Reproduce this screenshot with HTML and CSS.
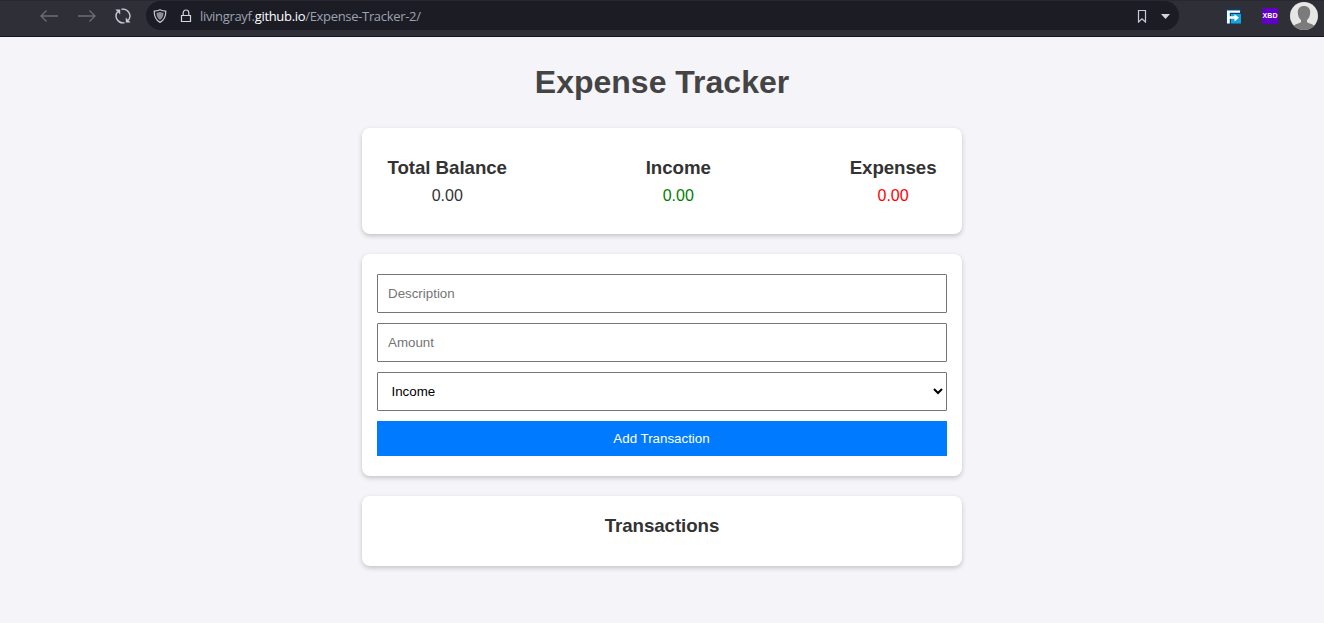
FILE: index.html
```html
<!DOCTYPE html>
<html lang="en">
<head>
<meta charset="utf-8">
<title>Expense Tracker</title>
<link rel="stylesheet" href="styles.css">
</head>
<body>
<header class="toolbar">
  <div class="nav">
    <svg width="18" height="12" viewBox="0 0 18 12" class="dim"><path d="M18 6H1M6.500.5L1 6l5.500 5.500"/></svg>
    <svg width="18" height="12" viewBox="0 0 18 12" class="dim"><path d="M0 6h17M11.500.5L17 6l-5.500 5.500"/></svg>
    <svg width="16" height="16" viewBox="0 0 16 16" class="reload"><path d="M9.500 14.700A6.900 6.900 0 0 1 2.600 3.700M6.500 1.300a6.900 6.900 0 0 1 6.900 11"/><path class="solid" d="M.4 1.600h4.800v4.800zM15.600 14.400h-4.800V9.600z"/></svg>
  </div>
  <div class="address">
    <svg width="14" height="14" viewBox="0 0 14 14" class="shield"><path d="M7 .7c2 1 4 1.400 5.800 1.500C12.800 7.500 11.500 11 7 13.400 2.500 11 1.200 7.500 1.200 2.200 3 2.100 5 1.700 7 .7z"/><path class="core" d="M7 3c1.200.5 2.200.8 3.500.9C10.300 7.500 9.300 9.500 7 11 4.700 9.500 3.700 7.500 3.500 3.900 4.800 3.800 5.800 3.500 7 3z"/></svg>
    <svg width="12" height="14" viewBox="0 0 12 14" class="lock"><path d="M1.500 6.500h9v6h-9zM3.200 6.500V3.800a2.800 2.800 0 0 1 5.600 0v2.700"/></svg>
    <span class="url">livingrayf.<b>github.io</b>/Expense-Tracker-2/</span>
    <svg width="10" height="14" viewBox="0 0 10 14" class="bookmark"><path d="M1.500 1.500h7V13L5 9.800 1.500 13z"/></svg>
    <svg width="9" height="5" viewBox="0 0 9 5" class="caret"><path d="M0 0h9L4.500 5z"/></svg>
  </div>
  <div class="extensions">
    <svg width="16" height="16" viewBox="0 0 16 16"><path fill="#064477" d="M0 1h15v14.500H0z"/><path fill="#12a5df" d="M5 6h10v9.500H5z"/><path fill="#fff" d="M1 2.500h13v2.300H3.800v3.400h4.700V6L13 9.700l-4.500 3.800v-2.700H3.800v4.700H1z"/></svg>
    <span class="xbd">XBD</span>
    <svg width="28" height="28" viewBox="0 0 28 28"><defs><clipPath id="face"><circle cx="14" cy="14" r="14"/></clipPath></defs><g clip-path="url(#face)"><path fill="#e6e6e6" d="M0 0h28v28H0z"/><path fill="#7b7b7b" d="M14 4c4 0 6.300 2.600 6.200 6.400-.1 3.800-1.500 6-3.200 7.600v2c1.500 1.700 5 1.500 7.500 4V28h-21v-4C6 21.500 9.500 21.700 11 20v-2c-1.700-1.600-3.100-3.800-3.200-7.600C7.700 6.600 10 4 14 4z"/></g></svg>
  </div>
</header>
<main class="page">
  <h1 class="title">Expense Tracker</h1>
  <section class="card summary">
    <div><h3>Total Balance</h3><p>0.00</p></div>
    <div><h3>Income</h3><p class="income">0.00</p></div>
    <div><h3>Expenses</h3><p class="expense">0.00</p></div>
  </section>
  <form class="card form">
    <input class="field" type="text" placeholder="Description">
    <input class="field" type="number" placeholder="Amount">
    <select class="field select"><option>Income</option><option>Expense</option></select>
    <button class="submit" type="button">Add Transaction</button>
  </form>
  <section class="card history"><h3>Transactions</h3></section>
</main>
</body>
</html>
```
FILE: styles.css
```css
* { box-sizing: border-box; margin: 0; padding: 0; }
body { background: #f4f4f9; color: #333; font-family: "Liberation Sans", Arial, sans-serif; height: 623px; overflow: hidden; }
svg { display: block; flex: none; fill: none; }
.toolbar { display: flex; align-items: flex-start; height: 37px; background: #2f2f38; border-bottom: 1px solid #17171f; border-top: 1px solid #282830; }
.nav { display: flex; align-items: center; gap: 19.500px; width: 146px; height: 30px; padding-left: 40px; }
.dim { stroke: #6e6e77; stroke-width: 1.3; }
.reload { stroke: #c5cbd5; stroke-width: 1.4; }
.reload .solid { fill: #c5cbd5; stroke: none; }
.address { display: flex; align-items: center; width: 1033px; height: 29px; padding: 0 9px 0 7px; border-radius: 15px; background: #1c1c25; }
.shield { stroke: #c5cbd5; stroke-width: 1.2; }
.shield .core { fill: #888f9a; stroke: none; }
.lock { margin-left: 13px; stroke: #d0d6df; stroke-width: 1.2; }
.url { margin-left: 8px; flex: 1; font: 13px/20px "Open Sans", "Noto Sans", sans-serif; letter-spacing: -.32px; color: #9ba3b0; white-space: nowrap; }
.url b { font-weight: 400; color: #fff; }
.bookmark { stroke: #c5cbd5; stroke-width: 1.2; margin-right: 14px; }
.caret { fill: #d0d6df; position: relative; top: 1px; }
.extensions { display: flex; align-items: center; height: 30px; margin-left: 47px; }
.xbd { width: 16px; height: 16px; margin: 0 12px 0 20px; background: #6100c2; color: #fff; font: bold 7px/16px "Liberation Sans", sans-serif; letter-spacing: .1px; text-align: center; }
.page { width: 600px; margin: 0 auto; }
.title { margin: 27px 0 27px; font-size: 32px; line-height: 37px; text-align: center; color: #444; }
.card { background: #fff; border-radius: 8px; box-shadow: 0 2px 5px rgba(0, 0, 0, .2); margin-bottom: 20px; text-align: center; }
.card h3 { font-size: 18.72px; line-height: 22px; letter-spacing: -.06px; }
.summary { display: flex; justify-content: space-between; height: 106px; padding: 29px 25.500px 27px; }
.summary p { margin-top: 8px; font-size: 16px; line-height: 18px; }
.summary .income { color: green; }
.summary .expense { color: red; }
.form { display: flex; flex-direction: column; gap: 10px; padding: 20px 15px; }
.field { width: 100%; height: 39px; padding: 10px; border: 1px solid #767676; border-radius: 1px; background: #fff; font: 13.333px "Liberation Sans", Arial, sans-serif; }
.field::placeholder { color: #757575; }
.select { color: #000; padding-left: 9.500px; padding-right: 1px; }
.submit { height: 35px; padding-right: 1px; border: 0; background: #007bff; color: #fff; font: 13.333px "Liberation Sans", Arial, sans-serif; }
.history { height: 70px; padding-top: 19px; }
```
